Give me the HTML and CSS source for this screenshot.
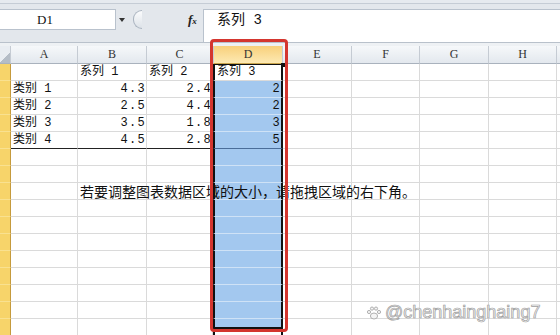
FILE: index.html
```html
<!DOCTYPE html>
<html>
<head>
<meta charset="utf-8">
<title>图表数据区域</title>
<link rel="stylesheet" href="styles.css">
</head>
<body>
<div class="ribbon-edge"></div>
<div class="fbar">
  <div class="fbar-left">
    <div class="namebox">D1</div>
    <span class="drop"></span>
    <span class="grip"></span>
    <span class="fx">f<small>x</small></span>
  </div>
  <div class="formula">系列 3</div>
</div>

<div class="sheet">
  <div class="row head">
    <span class="corner"></span><span>A</span><span>B</span><span>C</span><span class="d">D</span><span>E</span><span>F</span><span>G</span><span>H</span><span></span>
  </div>
  <div class="row">
    <span class="rh"></span><span></span><span>系列 1</span><span>系列 2</span><span class="d active">系列 3</span><span></span><span></span><span></span><span></span><span></span>
  </div>
  <div class="row">
    <span class="rh"></span><span>类别 1</span><span class="n">4.3</span><span class="n">2.4</span><span class="d sel n">2</span><span></span><span></span><span></span><span></span><span></span>
  </div>
  <div class="row">
    <span class="rh"></span><span>类别 2</span><span class="n">2.5</span><span class="n">4.4</span><span class="d sel n">2</span><span></span><span></span><span></span><span></span><span></span>
  </div>
  <div class="row">
    <span class="rh"></span><span>类别 3</span><span class="n">3.5</span><span class="n">1.8</span><span class="d sel n">3</span><span></span><span></span><span></span><span></span><span></span>
  </div>
  <div class="row">
    <span class="rh"></span><span class="edge">类别 4</span><span class="n edge">4.5</span><span class="n edge">2.8</span><span class="d sel n edge">5</span><span></span><span></span><span></span><span></span><span></span>
  </div>
  <div class="row">
    <span class="rh"></span><span></span><span></span><span></span><span class="d sel"></span><span></span><span></span><span></span><span></span><span></span>
  </div>
  <div class="row">
    <span class="rh"></span><span></span><span></span><span></span><span class="d sel"></span><span></span><span></span><span></span><span></span><span></span>
  </div>
  <div class="row">
    <span class="rh"></span><span></span><span class="note">若要调整图表数据区域的大小，请拖拽区域的右下角。</span><span></span><span class="d sel"></span><span></span><span></span><span></span><span></span><span></span>
  </div>
  <div class="row">
    <span class="rh"></span><span></span><span></span><span></span><span class="d sel"></span><span></span><span></span><span></span><span></span><span></span>
  </div>
  <div class="row">
    <span class="rh"></span><span></span><span></span><span></span><span class="d sel"></span><span></span><span></span><span></span><span></span><span></span>
  </div>
  <div class="row">
    <span class="rh"></span><span></span><span></span><span></span><span class="d sel"></span><span></span><span></span><span></span><span></span><span></span>
  </div>
  <div class="row">
    <span class="rh"></span><span></span><span></span><span></span><span class="d sel"></span><span></span><span></span><span></span><span></span><span></span>
  </div>
  <div class="row">
    <span class="rh"></span><span></span><span></span><span></span><span class="d sel"></span><span></span><span></span><span></span><span></span><span></span>
  </div>
  <div class="row">
    <span class="rh"></span><span></span><span></span><span></span><span class="d sel"></span><span></span><span></span><span></span><span></span><span></span>
  </div>
  <div class="row">
    <span class="rh"></span><span></span><span></span><span></span><span class="d sel"></span><span></span><span></span><span></span><span></span><span></span>
  </div>
  <div class="row">
    <span class="rh"></span><span></span><span></span><span></span><span class="d sel tail"></span><span></span><span></span><span></span><span></span><span></span>
  </div>
</div>

<!-- selection frame drawn over the grid -->
<div class="frame"></div>

<div class="mark">
  <svg width="16" height="16" viewBox="0 0 16 16" fill="#f4f4f4" stroke="#a8a8a8" stroke-width="0.9">
    <ellipse cx="8" cy="11" rx="3.6" ry="3"/>
    <circle cx="3" cy="7" r="1.6"/>
    <circle cx="6" cy="3.6" r="1.6"/>
    <circle cx="10" cy="3.6" r="1.6"/>
    <circle cx="13" cy="7" r="1.6"/>
  </svg>
  <span>@chenhainghaing7</span>
</div>
</body>
</html>
```

FILE: styles.css
```css
* { box-sizing: border-box; }

body {
  margin: 0;
  width: 560px;
  height: 335px;
  overflow: hidden;
  position: relative;
  background: #fff;
  font-family: "Noto Sans CJK SC", sans-serif;
  color: #111;
}

/* formula bar */
.ribbon-edge {
  height: 4px;
  background: #e6eaef;
  border-bottom: 1px solid #c5ccd5;
}
.fbar {
  display: flex;
  height: 39px;
  background: #e3e7ec;
  border-bottom: 1px solid #b9c1cb;
}
.fbar-left {
  width: 203px;
  height: 26px;
  padding-top: 5px;
  display: flex;
  align-items: center;
}
.namebox {
  width: 116px;
  height: 21px;
  background: #fff;
  border: 1px solid #b9c2cd;
  border-left: none;
  padding-left: 37px;
  font: 13px/19px "Liberation Serif", serif;
}
.drop {
  margin-left: 3px;
  border-left: 3.5px solid transparent;
  border-right: 3.5px solid transparent;
  border-top: 4px solid #333;
}
.grip {
  width: 9px;
  height: 19px;
  margin-left: 8px;
  border: 1px solid #a9b3bf;
  border-right: none;
  border-radius: 10px 0 0 10px;
  background: linear-gradient(#fbfcfd, #dde2e8);
}
.fx {
  margin-left: 46px;
  font: italic bold 13px "Liberation Serif", serif;
  color: #222;
}
.fx small { font-size: 9px; }
.formula {
  flex: 1;
  margin-top: 5px;
  background: #fff;
  border-top: 1px solid #b9c2cd;
  border-left: 1px solid #b9c2cd;
  padding-left: 13px;
  font-family: "Liberation Mono", "Noto Sans CJK SC", monospace;
  font-size: 14px;
  line-height: 20px;
}

/* grid */
.sheet { border-top: 3px solid #eef1f4; }
.row {
  display: grid;
  grid-template-columns: 11px 67px 69px 66px 70px 69px 68px 69px 68px 1fr;
  height: 17px;
}
.row span {
  border-right: 1px solid #dadada;
  border-bottom: 1px solid #dadada;
  padding: 0 2px;
  font-family: "Liberation Mono", "Noto Sans CJK SC", monospace;
  font-size: 12px;
  line-height: 16px;
  white-space: nowrap;
  overflow: hidden;
}
.row .n {
  text-align: right;
  padding-right: 0;
  letter-spacing: 1.3px;
}
.row .edge { border-bottom-color: #222; }

.row.head { height: 18px; }
.row.head span {
  background: linear-gradient(#f6f8fa, #e3e8ee);
  border-right-color: #c5cbd3;
  border-bottom-color: #a9b2bd;
  text-align: center;
  font: 12px/17px "Liberation Serif", serif;
  color: #333;
}
.row.head .corner {
  background: linear-gradient(135deg, #e9edf2 60%, #b5bdc7 60%);
}
.row.head .d {
  background: linear-gradient(#f8d07a, #fde9b3);
  border-bottom-color: #c9a44c;
}

.row .rh {
  background: #f7d46a;
  border-right: 1px solid #c59a3c;
  border-bottom-color: #f9e190;
}

.row .d {
  border-left: 2px solid #111;
  border-right: 2px solid #111;
}
.row.head .d { border-left: 1px solid #c5cbd3; border-right: 1px solid #c5cbd3; }
.row .active {
  position: relative;
  overflow: visible;
  background: #fff;
  border-top: 1px solid #111;
  line-height: 15px;
}
.row .active::after {
  content: "";
  position: absolute;
  right: -4px;
  top: -2px;
  width: 4px;
  height: 4px;
  background: #111;
}
.row .sel {
  background: #a3c8ef;
  border-bottom-color: #cfe2f6;
}
.row .sel.edge { border-bottom-color: #4a6d99; }
.row .tail {
  background: linear-gradient(#a3c8ef 0 8px, #111 8px 10px, #fff 10px);
  border-bottom: none;
}

.row .note {
  overflow: visible;
  position: relative;
  z-index: 1;
  font-family: "Noto Sans CJK SC", sans-serif;
  font-size: 14px;
  line-height: 16px;
}

.frame {
  position: absolute;
  left: 210px;
  top: 39px;
  width: 78px;
  height: 293px;
  border: 3px solid #d4362f;
  border-radius: 4px;
  z-index: 2;
}

.mark {
  position: absolute;
  left: 366px;
  top: 302px;
  display: flex;
  align-items: center;
  gap: 3px;
  z-index: 3;
  font: 18px "Liberation Sans", sans-serif;
  color: #f4f4f4;
  -webkit-text-stroke: 0.7px #a0a0a0;
}
```
